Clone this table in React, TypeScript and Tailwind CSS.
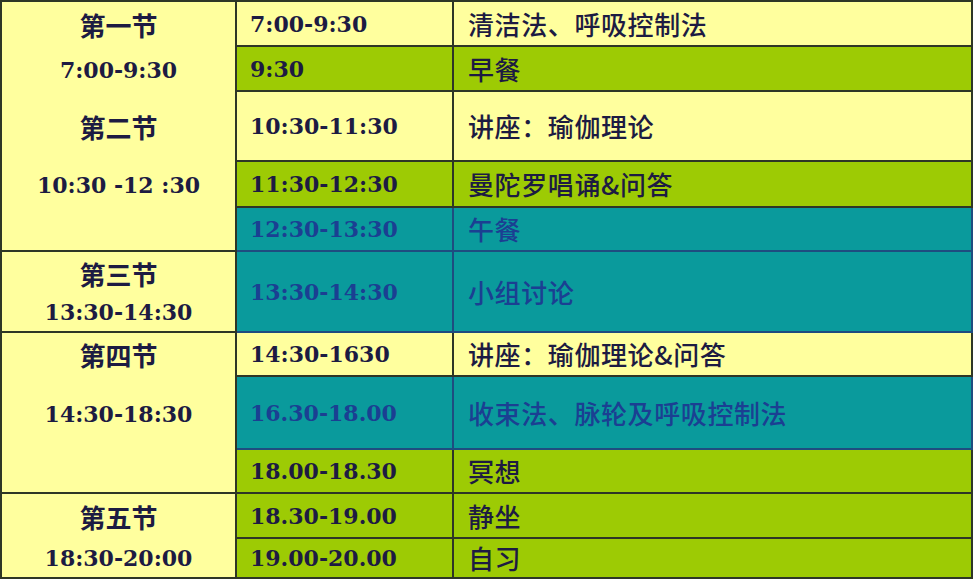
import React from "react";

type Row = { time: string; text: string; kind: "y" | "g" | "t" };

const rows: Row[] = [
  { time: "7:00-9:30", text: "清洁法、呼吸控制法", kind: "y" },
  { time: "9:30", text: "早餐", kind: "g" },
  { time: "10:30-11:30", text: "讲座：瑜伽理论", kind: "y" },
  { time: "11:30-12:30", text: "曼陀罗唱诵&问答", kind: "g" },
  { time: "12:30-13:30", text: "午餐", kind: "t" },
  { time: "13:30-14:30", text: "小组讨论", kind: "t" },
  { time: "14:30-1630", text: "讲座：瑜伽理论&问答", kind: "y" },
  { time: "16.30-18.00", text: "收束法、脉轮及呼吸控制法", kind: "t" },
  { time: "18.00-18.30", text: "冥想", kind: "g" },
  { time: "18.30-19.00", text: "静坐", kind: "g" },
  { time: "19.00-20.00", text: "自习", kind: "g" },
];

const rowStart = [
  "row-start-1",
  "row-start-2",
  "row-start-3",
  "row-start-4",
  "row-start-5",
  "row-start-6",
  "row-start-7",
  "row-start-8",
  "row-start-9",
  "row-start-10",
  "row-start-11",
];

const kindCls: Record<Row["kind"], string> = {
  y: "bg-[#ffff9e] border-[#2e3626] text-[#1d1b42]",
  g: "bg-[#9dcb04] border-[#2e3626] text-[#1d1b42]",
  t: "bg-[#0a9a9c] border-[#1e4c80] text-[#1b3f92]",
};

const cjk = "font-['Noto_Sans_CJK_SC',sans-serif]";
const serif = "font-['DejaVu_Serif',serif] font-bold";

function Cjk({ children }: { children: React.ReactNode }) {
  return <span className={`${cjk} font-bold text-[26px] leading-none`}>{children}</span>;
}
function Num({ children }: { children: React.ReactNode }) {
  return <span className={`${serif} text-[22px] leading-none whitespace-pre`}>{children}</span>;
}

export default function App() {
  const leftBase =
    "col-start-1 bg-[#ffff9e] border-r-2 border-b-2 border-[#2e3626] text-[#1d1b42] grid grid-rows-subgrid";
  return (
    <div className="w-[976px] h-[580px] bg-white overflow-hidden">
      <div className="grid grid-cols-[235px_217px_519px] grid-rows-[45px_45px_70px_46px_44px_81px_44px_73px_44px_45px_40px] border-t-2 border-l-2 border-[#2e3626] w-[973px]">
        {/* Left column groups */}
        <div className={`${leftBase} row-start-1 row-span-5`}>
          <div className="flex items-center justify-center"><Cjk>第一节</Cjk></div>
          <div className="flex items-center justify-center"><Num>7:00-9:30</Num></div>
          <div className="flex items-center justify-center"><Cjk>第二节</Cjk></div>
          <div className="flex items-center justify-center"><Num>10:30 -12 :30</Num></div>
          <div />
        </div>
        <div className="col-start-1 row-start-6 bg-[#ffff9e] border-r-2 border-b-2 border-[#2e3626] text-[#1d1b42] flex flex-col items-center justify-center gap-[14px]">
          <Cjk>第三节</Cjk>
          <Num>13:30-14:30</Num>
        </div>
        <div className={`${leftBase} row-start-7 row-span-3`}>
          <div className="flex items-center justify-center"><Cjk>第四节</Cjk></div>
          <div className="flex items-center justify-center"><Num>14:30-18:30</Num></div>
          <div />
        </div>
        <div className={`${leftBase} row-start-10 row-span-2`}>
          <div className="flex items-center justify-center"><Cjk>第五节</Cjk></div>
          <div className="flex items-center justify-center"><Num>18:30-20:00</Num></div>
        </div>

        {rows.map((r, i) => (
          <React.Fragment key={i}>
            <div
              className={`col-start-2 ${rowStart[i]} ${kindCls[r.kind]} border-r-2 border-b-2 flex items-center pl-[13px]`}
            >
              <Num>{r.time}</Num>
            </div>
            <div
              className={`col-start-3 ${rowStart[i]} ${kindCls[r.kind]} border-r-2 border-b-2 flex items-center pl-[14px]`}
            >
              <span className={`${cjk} font-medium text-[26px] leading-none tracking-[0.6px]`}>{r.text}</span>
            </div>
          </React.Fragment>
        ))}
      </div>
    </div>
  );
}
